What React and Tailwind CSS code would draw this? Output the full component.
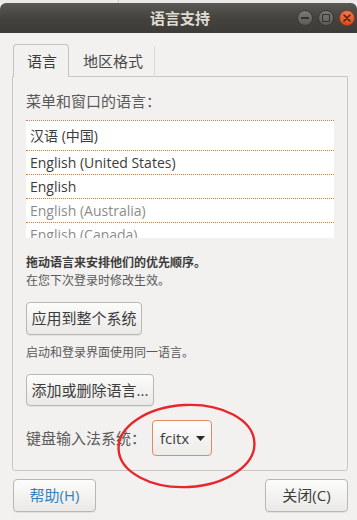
import React from "react";

const FONT = { fontFamily: '"Open Sans", "Noto Sans CJK SC", sans-serif' };

function TitleButtons() {
  return (
    <div className="flex items-center gap-[5px] pr-[2px]">
      <div className="w-[16px] h-[16px] rounded-full bg-gradient-to-b from-[#7a7975] to-[#5c5b57] border border-[#3a3935] flex items-center justify-center">
        <div className="w-[8px] h-[2px] bg-[#34332f]" />
      </div>
      <div className="w-[16px] h-[16px] rounded-full bg-gradient-to-b from-[#7a7975] to-[#5c5b57] border border-[#3a3935] flex items-center justify-center">
        <div className="w-[8px] h-[8px] border-[1.5px] border-[#34332f]" />
      </div>
      <div className="w-[16px] h-[16px] rounded-full bg-gradient-to-b from-[#f07a4c] to-[#e0481b] border border-[#9c3a18] flex items-center justify-center">
        <svg width="8" height="8" viewBox="0 0 8 8">
          <path d="M1 1 L7 7 M7 1 L1 7" stroke="#5a2110" strokeWidth="1.6" strokeLinecap="round" />
        </svg>
      </div>
    </div>
  );
}

function Btn({ children, className = "" }) {
  return (
    <div
      className={
        "flex items-center justify-center rounded-[4px] border border-[#b9b7b3] bg-gradient-to-b from-[#fcfcfb] to-[#eae9e7] shadow-[0_1px_0_rgba(0,0,0,0.06)] " +
        className
      }
    >
      {children}
    </div>
  );
}

export default function App() {
  const rows = [
    { t: "汉语 (中国)", c: "text-[#3c3c3c]", h: "h-[30px]" },
    { t: "English (United States)", c: "text-[#3c3c3c]", h: "h-[24px]" },
    { t: "English", c: "text-[#3c3c3c]", h: "h-[24px]" },
    { t: "English (Australia)", c: "text-[#8c8c8c]", h: "h-[24px]" },
    { t: "English (Canada)", c: "text-[#8c8c8c]", h: "h-[24px]" },
  ];
  return (
    <div className="relative w-[357px] h-[520px] overflow-hidden bg-[#f2f1f0]" style={FONT}>
      {/* top strip from window behind */}
      <div className="relative h-[3px] bg-[#ebeae8]">
        <div className="absolute left-[118px] top-0 w-[1px] h-[3px] bg-[#c9c8c5]" />
      </div>
      {/* title bar */}
      <div className="relative h-[30px] rounded-t-[6px] bg-gradient-to-b from-[#5a5954] via-[#44433f] to-[#3c3b37] flex items-center justify-end">
        <div className="absolute inset-0 flex items-center justify-center pl-[3px]">
          <span className="text-[15px] font-bold text-[#dfdbd2] leading-none">语言支持</span>
        </div>
        <div className="relative">
          <TitleButtons />
        </div>
      </div>

      {/* tabs */}
      <div className="pl-[13px] pt-[12px] flex items-end h-[44px]">
        <div className="w-[56px] h-[33px] rounded-t-[4px] border border-b-0 border-[#c6c4c0] bg-[#f2f1f0] flex items-center pl-[13px] relative z-10">
          <span className="text-[15px] text-[#3c3c3c]">语言</span>
        </div>
        <div className="w-[86px] h-[31px] flex items-center pl-[14px] border-r border-[#dcdad6]">
          <span className="text-[15px] text-[#4a4a4a]">地区格式</span>
        </div>
      </div>

      {/* notebook frame */}
      <div className="mx-[12px] -mt-[1px] w-[336px] h-[395px] border border-[#c9c7c3] rounded-b-[3px] px-[13px] pt-[14px]">
        <div className="text-[15px] leading-[20px] text-[#5a5a5a] h-[20px]">菜单和窗口的语言：</div>
        <div className="mt-[9px] bg-white h-[118px] overflow-hidden">
          {rows.map((r, i) => (
            <div
              key={i}
              className={"border-t border-dotted border-[#e5794d] flex items-center pl-[4px] shrink-0 " + r.h}
            >
              <span className={"text-[14px] leading-none whitespace-nowrap " + r.c}>{r.t}</span>
            </div>
          ))}
        </div>
        <div className="mt-[16px] text-[12px] leading-[18px] font-bold text-[#3c3c3c]">拖动语言来安排他们的优先顺序。</div>
        <div className="text-[12px] leading-[18px] text-[#5a5a5a]">在您下次登录时修改生效。</div>
        <Btn className="mt-[12px] w-[116px] h-[33px]">
          <span className="text-[15px] text-[#3c3c3c]">应用到整个系统</span>
        </Btn>
        <div className="mt-[9px] text-[12px] leading-[18px] text-[#5a5a5a]">启动和登录界面使用同一语言。</div>
        <Btn className="mt-[12px] w-[128px] h-[32px]">
          <span className="text-[15px] text-[#3c3c3c]">添加或删除语言...</span>
        </Btn>
        <div className="mt-[14px] flex items-center">
          <span className="text-[15px] text-[#5a5a5a] w-[126px]">键盘输入法系统：</span>
          <div className="w-[60px] h-[36px] rounded-[4px] border border-[#e08a66] bg-gradient-to-b from-[#fdfdfc] to-[#ecebe9] flex items-center pl-[7px]">
            <span className="text-[15px] text-[#3c3c3c] leading-none">fcitx</span>
            <svg className="ml-[7px]" width="9" height="5" viewBox="0 0 9 5">
              <path d="M0 0 L9 0 L4.5 5 Z" fill="#2a2a2a" />
            </svg>
          </div>
        </div>
      </div>

      {/* bottom buttons */}
      <div className="mt-[8px] px-[13px] pr-[9px] flex justify-between">
        <Btn className="w-[83px] h-[33px]">
          <span className="text-[15px] text-[#2f84c4]">帮助(H)</span>
        </Btn>
        <Btn className="w-[83px] h-[33px]">
          <span className="text-[15px] text-[#3c3c3c]">关闭(C)</span>
        </Btn>
      </div>

      {/* red annotation ellipse */}
      <svg className="absolute left-0 top-0 pointer-events-none" width="357" height="520">
        <ellipse cx="186.5" cy="446" rx="68" ry="41" fill="none" stroke="#e8262b" strokeWidth="2.4" transform="rotate(-3 186.5 446)" />
      </svg>
    </div>
  );
}
